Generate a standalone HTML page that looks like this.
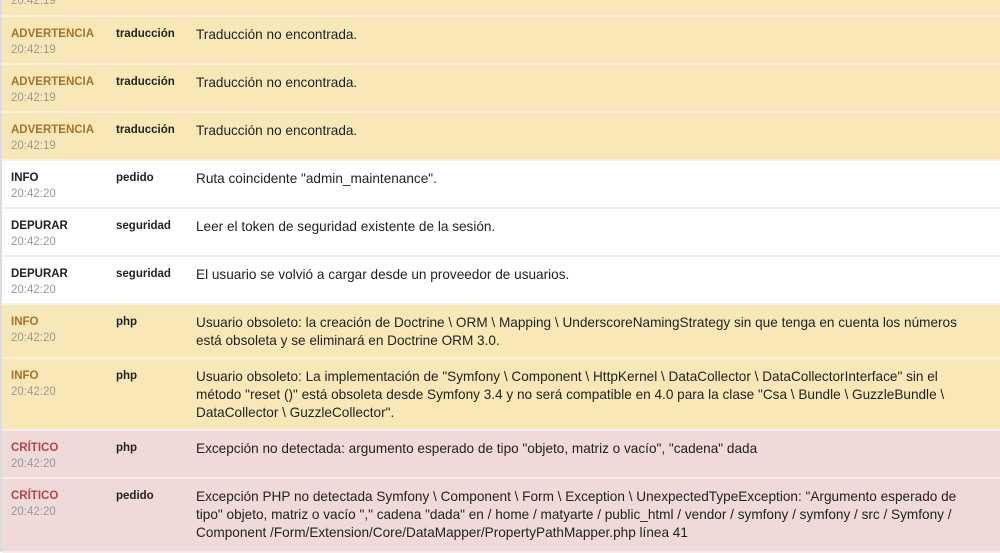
<!DOCTYPE html><html><head><style>
body{margin:0;width:1000px;height:552px;overflow:hidden;background:#fff;font-family:"Liberation Sans",Arial,sans-serif;}
.wrap{position:absolute;left:0;top:0;width:999px;border-left:2px solid #ddd;border-right:1px solid #ccc;height:552px;}
.r{position:absolute;left:0;right:0;border-bottom:2px solid #fbf0d8;}
.y{background:#f9e8b7}.w{background:#fff;border-bottom-color:#eee}.c{background:#f0dad9;border-bottom-color:#f7ecec}
.lv{position:absolute;left:9px;top:11px;font-size:11.5px;font-weight:bold}
.t{position:absolute;left:9px;top:27px;font-size:11.5px;color:#999}
.ch{position:absolute;left:114px;top:11px;font-size:11.5px;font-weight:bold;color:#222}
.m{position:absolute;left:194px;top:9px;font-size:13.6px;line-height:18px;color:#222;width:775px}
.wa{color:#a8712a}.in{color:#222}.cr{color:#b34645}
</style></head><body><div class="wrap">
<div class="r y" style="top:-32px;height:47px"><div class="t">20:42:19</div></div>
<div class="r y" style="top:17px;height:46px"><div class="lv wa">ADVERTENCIA</div><div class="t">20:42:19</div><div class="ch">traducción</div><div class="m">Traducción no encontrada.</div></div>
<div class="r y" style="top:65px;height:46px"><div class="lv wa">ADVERTENCIA</div><div class="t">20:42:19</div><div class="ch">traducción</div><div class="m">Traducción no encontrada.</div></div>
<div class="r y" style="top:113px;height:46px"><div class="lv wa">ADVERTENCIA</div><div class="t">20:42:19</div><div class="ch">traducción</div><div class="m">Traducción no encontrada.</div></div>
<div class="r w" style="top:161px;height:46px"><div class="lv in">INFO</div><div class="t">20:42:20</div><div class="ch">pedido</div><div class="m">Ruta coincidente "admin_maintenance".</div></div>
<div class="r w" style="top:209px;height:46px"><div class="lv in">DEPURAR</div><div class="t">20:42:20</div><div class="ch">seguridad</div><div class="m">Leer el token de seguridad existente de la sesión.</div></div>
<div class="r w" style="top:257px;height:46px;border-bottom-color:#f4f0e6"><div class="lv in">DEPURAR</div><div class="t">20:42:20</div><div class="ch">seguridad</div><div class="m">El usuario se volvió a cargar desde un proveedor de usuarios.</div></div>
<div class="r y" style="top:305px;height:52px"><div class="lv wa">INFO</div><div class="t">20:42:20</div><div class="ch">php</div><div class="m">Usuario obsoleto: la creación de Doctrine \ ORM \ Mapping \ UnderscoreNamingStrategy sin que tenga en cuenta los números está obsoleta y se eliminará en Doctrine ORM 3.0.</div></div>
<div class="r y" style="top:359px;height:70px;border-bottom-color:#f6ecea"><div class="lv wa">INFO</div><div class="t">20:42:20</div><div class="ch">php</div><div class="m">Usuario obsoleto: La implementación de "Symfony \ Component \ HttpKernel \ DataCollector \ DataCollectorInterface" sin el método "reset ()" está obsoleta desde Symfony 3.4 y no será compatible en 4.0 para la clase "Csa \ Bundle \ GuzzleBundle \ DataCollector \ GuzzleCollector".</div></div>
<div class="r c" style="top:431px;height:46px"><div class="lv cr">CRÍTICO</div><div class="t">20:42:20</div><div class="ch">php</div><div class="m">Excepción no detectada: argumento esperado de tipo "objeto, matriz o vacío", "cadena" dada</div></div>
<div class="r c" style="top:479px;height:72px"><div class="lv cr">CRÍTICO</div><div class="t">20:42:20</div><div class="ch">pedido</div><div class="m">Excepción PHP no detectada Symfony \ Component \ Form \ Exception \ UnexpectedTypeException: "Argumento esperado de tipo" objeto, matriz o vacío "," cadena "dada" en / home / matyarte / public_html / vendor / symfony / symfony / src / Symfony / Component /Form/Extension/Core/DataMapper/PropertyPathMapper.php línea 41</div></div>
</div></body></html>
